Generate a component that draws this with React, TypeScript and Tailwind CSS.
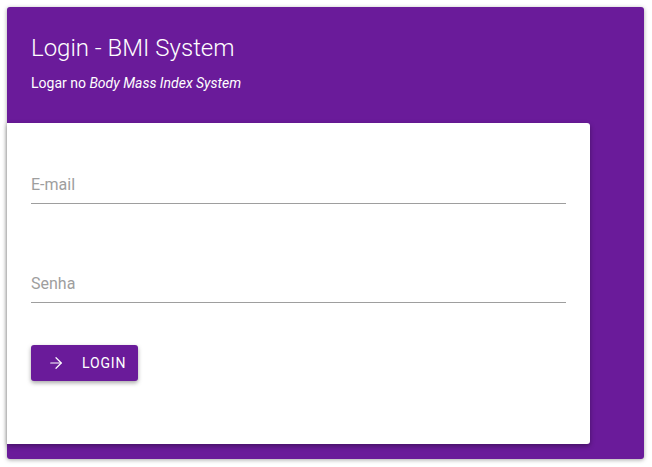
import { ArrowRight } from "lucide-react";

function Field({ label, type }: { label: string; type: string }) {
  return (
    <label className="block">
      <input
        type={type}
        placeholder={label}
        className="w-full h-[32px] border-b border-[#9e9e9e] bg-transparent pb-[7px] text-[16px] text-[#212121] outline-none placeholder:text-[#9e9e9e]"
      />
    </label>
  );
}

export default function App() {
  return (
    <div className="w-[652px] h-[467px] bg-white p-[7px] pr-[8px] font-['Roboto',sans-serif]">
      <div className="h-[452px] w-[637px] rounded-[3px] bg-[#6a1b9a] shadow-[0_1px_4px_rgba(0,0,0,0.35)] flex flex-col">
        <div className="px-[24px] pt-[25px] pb-[30px] text-white">
          <h1 className="text-[24px] leading-[32px] font-light">Login - BMI System</h1>
          <p className="mt-[9px] text-[14px] leading-[20px]">
            Logar no <em>Body Mass Index System</em>
          </p>
        </div>
        <div className="w-[583px] h-[321px] bg-white rounded-r-[3px] shadow-[0_2px_5px_rgba(0,0,0,0.35)] px-[24px] pt-[49px]">
          <Field label="E-mail" type="email" />
          <div className="h-[67px]" />
          <Field label="Senha" type="password" />
          <button className="mt-[42px] h-[36px] w-[107px] flex items-center gap-[17px] pl-[16px] rounded-[3px] bg-[#6a1b9a] text-white text-[14px] font-normal tracking-[0.06em] shadow-[0_2px_4px_rgba(0,0,0,0.35)]">
            <ArrowRight size={18} strokeWidth={1.6} />
            LOGIN
          </button>
        </div>
      </div>
    </div>
  );
}
